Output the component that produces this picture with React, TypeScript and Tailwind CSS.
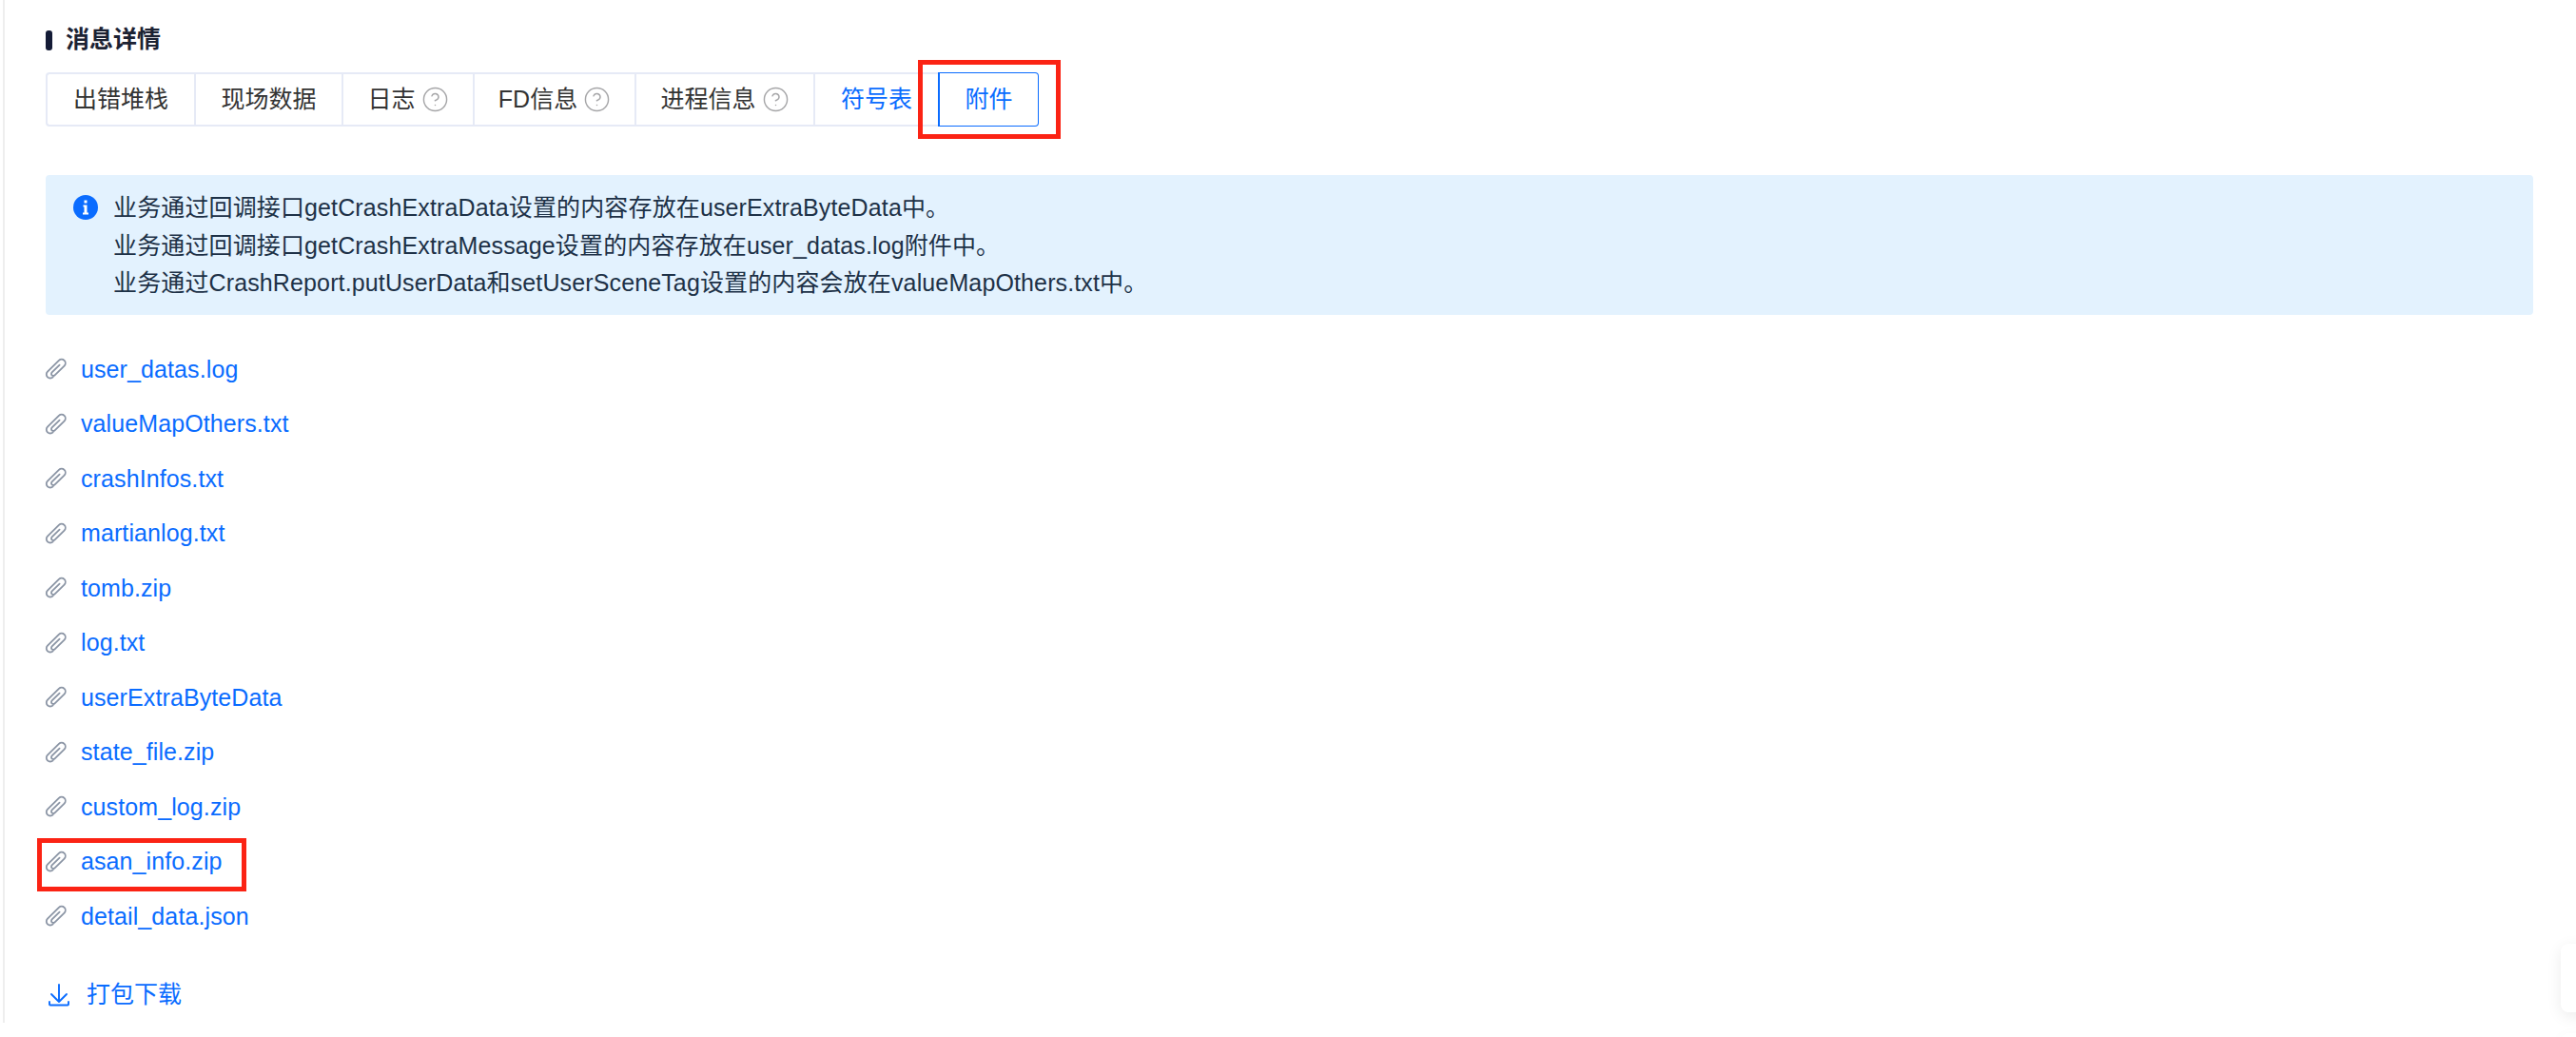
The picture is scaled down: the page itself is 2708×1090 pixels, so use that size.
import React from 'react';
import { CircleHelp } from 'lucide-react';

const tabs = [
  { name: '出错堆栈', width: 'w-[156px]' },
  { name: '现场数据', width: 'w-[155px]' },
  { name: '日志', width: 'w-[138px]', help: true },
  { name: 'FD信息', width: 'w-[170px]', help: true },
  { name: '进程信息', width: 'w-[188px]', help: true },
  { name: '符号表', width: 'w-[131px]', link: true },
];

const files = [
  'user_datas.log',
  'valueMapOthers.txt',
  'crashInfos.txt',
  'martianlog.txt',
  'tomb.zip',
  'log.txt',
  'userExtraByteData',
  'state_file.zip',
  'custom_log.zip',
  'asan_info.zip',
  'detail_data.json',
];

const InfoIcon = () => (
  <svg width="26" height="26" viewBox="0 0 26 26" className="shrink-0">
    <circle cx="13" cy="13" r="13" fill="#0a6cff" />
    <rect x="11.5" y="5.5" width="3" height="3" fill="#fff" />
    <path d="M10.5 10.5h4v8h1.5v2h-6v-2h1.5v-6h-1z" fill="#fff" />
  </svg>
);

const ClipIcon = () => (
  <svg width="24" height="24" viewBox="0 0 24 24" fill="none" stroke="#8b95a5" strokeWidth="1.8" strokeLinecap="round" className="shrink-0">
    <path d="M15.6 7.6 7.6 15.4a2.1 2.1 0 0 0 3 3L20.6 8.6a4 4 0 0 0-5.7-5.7L3 14.6a4 4 0 0 0 0 5.7 4 4 0 0 0 5.7 0" />
  </svg>
);

const DownloadIcon = () => (
  <svg width="22" height="24" viewBox="0 0 22 24" fill="none" stroke="#0a6cff" strokeWidth="1.9" strokeLinecap="round" strokeLinejoin="round" className="shrink-0">
    <path d="M11 1v18M3 11l8 8 8-8" />
    <path d="M1 19v2.5a1 1 0 0 0 1 1h18a1 1 0 0 0 1-1V19" />
  </svg>
);

export default function App() {
  return (
    <div className="relative h-[1090px] w-full overflow-hidden bg-white text-[25px] font-['Liberation_Sans','Noto_Sans_CJK_SC',sans-serif]">
      <div className="ml-[3px] h-[1075px] border-l-2 border-[#eeeeee] pl-[43px] pr-[45px] pt-[27px]">
        {/* Section title */}
        <div className="flex h-[30px] items-center">
          <span className="h-[21px] w-[7px] rounded-[3px] bg-[#141b36]" />
          <span className="ml-[14px] text-[25px] font-bold text-[#1c2233]">消息详情</span>
        </div>

        {/* Tabs */}
        <div className="mt-[19px] flex h-[57px] w-fit text-[#333333]">
          {tabs.map((tab, i) => (
            <div
              key={tab.name}
              className={`flex items-center justify-center gap-[6px] border-y-2 border-l-2 border-[#e6eaf6] ${tab.width} ${i === 0 ? 'rounded-l' : ''} ${tab.link ? 'text-[#0a6cff]' : ''}`}
            >
              {tab.name}
              {tab.help && <CircleHelp size={29} strokeWidth={1.2} className="text-[#a6a6a8]" />}
            </div>
          ))}
          <div className="flex w-[106px] items-center justify-center rounded-r border border-l-2 border-[#0a6cff] text-[#0a6cff]">
            附件
          </div>
        </div>

        {/* Notice */}
        <div className="mt-[51px] flex h-[147px] gap-[16px] rounded bg-[#e3f2fe] pl-[29px] pt-[15px] leading-[39.5px] tracking-[0.13px] text-[#1d3147]">
          <div className="pt-[6px]">
            <InfoIcon />
          </div>
          <div>
            <p>业务通过回调接口getCrashExtraData设置的内容存放在userExtraByteData中。</p>
            <p>业务通过回调接口getCrashExtraMessage设置的内容存放在user_datas.log附件中。</p>
            <p>业务通过CrashReport.putUserData和setUserSceneTag设置的内容会放在valueMapOthers.txt中。</p>
          </div>
        </div>

        {/* Attachments */}
        <ul className="-ml-px mt-[28.5px]">
          {files.map(file => (
            <li key={file} className="flex h-[57.5px] items-center gap-[14px]">
              <ClipIcon />
              <span className="tracking-[0.1px] text-[#0a6cff]">{file}</span>
            </li>
          ))}
        </ul>

        <div className="mt-[34px] flex h-[40px] items-center gap-[18px] pl-[3px] text-[#0a6cff]">
          <DownloadIcon />
          打包下载
        </div>
      </div>

      {/* Red annotation boxes */}
      <div className="absolute left-[965px] top-[63px] h-[83px] w-[150px] border-[5px] border-[#fb2314]" />
      <div className="absolute left-[39px] top-[881px] h-[56px] w-[220px] border-[5px] border-[#fb2314]" />

      {/* Floating cards at the right edge */}
      <div className="absolute left-[2692px] top-[992px] h-[72px] w-[40px] rounded-lg bg-white shadow-[0_4px_16px_rgba(0,0,0,0.08)]" />
      <div className="absolute left-[2692px] top-[1086px] h-[72px] w-[40px] rounded-lg bg-white shadow-[0_4px_16px_rgba(0,0,0,0.04)]" />
    </div>
  );
}
